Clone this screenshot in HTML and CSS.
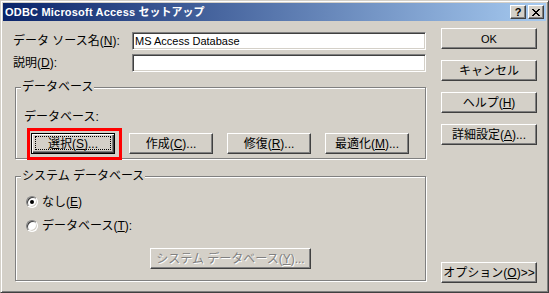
FILE: index.html
```html
<!DOCTYPE html>
<html lang="ja">
<head>
  <meta charset="UTF-8">
  <meta name="viewport" content="width=device-width, initial-scale=1.0">
  <link rel="stylesheet" href="styles.css">
  <title>ODBC Microsoft Access セットアップ</title>
</head>
<body>
  <div class="window">
    <div class="titlebar">
      <span class="title">ODBC Microsoft Access <span class="title_jp">セットアップ</span></span>
      <div class="caption_buttons">
        <div class="cap cap_help">?</div>
        <div class="cap">
          <svg width="8" height="7" viewBox="0 0 8 7" shape-rendering="crispEdges">
            <path d="M0 0h2v1H0z M6 0h2v1H6z M1 1h2v1H1z M5 1h2v1H5z M2 2h4v1H2z M3 3h2v1H3z M2 4h4v1H2z M1 5h2v1H1z M5 5h2v1H5z M0 6h2v1H0z M6 6h2v1H6z" fill="#000"/>
          </svg>
        </div>
      </div>
    </div>

    <div class="content">
      <div class="left">
        <div class="field">
          <label class="field_label">データ ソース名<span class="key">(<u>N</u>):</span></label>
          <div class="input">MS Access Database</div>
        </div>
        <div class="field">
          <label class="field_label">説明<span class="key">(<u>D</u>):</span></label>
          <div class="input"></div>
        </div>

        <fieldset class="group group_db">
          <legend>データベース</legend>
          <div class="caption">データベース<span class="key">:</span></div>
          <div class="btn_row">
            <button class="btn default marked">選択<span class="key">(<u>S</u>)...</span></button>
            <button class="btn">作成<span class="key">(<u>C</u>)...</span></button>
            <button class="btn">修復<span class="key">(<u>R</u>)...</span></button>
            <button class="btn">最適化<span class="key">(<u>M</u>)...</span></button>
          </div>
        </fieldset>

        <fieldset class="group group_sys">
          <legend>システム データベース</legend>
          <div class="option">
            <span class="radio checked"></span>
            <span>なし<span class="key">(<u>E</u>)</span></span>
          </div>
          <div class="option">
            <span class="radio"></span>
            <span>データベース<span class="key">(<u>T</u>):</span></span>
          </div>
          <button class="btn disabled sysdb">システム データベース<span class="key">(<u>Y</u>)...</span></button>
        </fieldset>
      </div>

      <div class="right">
        <button class="btn btn_latin">OK</button>
        <button class="btn">キャンセル</button>
        <button class="btn">ヘルプ<span class="key">(<u>H</u>)</span></button>
        <button class="btn">詳細設定<span class="key">(<u>A</u>)...</span></button>
        <button class="btn options">オプション<span class="key">(<u>O</u>)&gt;&gt;</span></button>
      </div>
    </div>
  </div>
</body>
</html>
```

FILE: styles.css
```css
* {
  box-sizing: border-box;
}

body {
  margin: 0;
  background: #d4d0c8;
  color: #000;
  font: 12px/14px "Liberation Sans", "Noto Sans CJK JP", sans-serif;
}

.window {
  display: flex;
  flex-direction: column;
  width: 549px;
  height: 293px;
  padding: 2px;
  border: 1px solid;
  border-color: #d4d0c8 #404040 #404040 #d4d0c8;
  box-shadow: inset 1px 1px #fff, inset -1px -1px #808080;
  background: #d4d0c8;
}

/* title bar */

.titlebar {
  display: flex;
  align-items: center;
  height: 18px;
  padding: 0 2px;
  background: linear-gradient(to right, #0a246a, #a6caf0);
  color: #fff;
}

.title {
  flex: 1;
  font: bold 11px/14px "Liberation Sans", "Noto Sans CJK JP", sans-serif;
  letter-spacing: 0.2px;
}

.title_jp {
  font-size: 11px;
  letter-spacing: 0;
}

.caption_buttons {
  display: flex;
  gap: 2px;
}

.cap {
  display: flex;
  align-items: center;
  justify-content: center;
  width: 16px;
  height: 14px;
  border: 1px solid;
  border-color: #fff #404040 #404040 #fff;
  box-shadow: inset -1px -1px #808080;
  background: #d4d0c8;
}

.cap_help {
  color: #000;
  font: bold 11px/1 "Liberation Sans", sans-serif;
}

/* body */

.content {
  flex: 1;
  display: flex;
  padding: 0 9px 7px 10px;
}

.left {
  width: 414px;
}

.right {
  display: flex;
  flex-direction: column;
  gap: 11px;
  width: 96px;
  margin-left: auto;
  padding-top: 7px;
}

.right .options {
  margin-top: auto;
}

.field {
  display: flex;
  align-items: center;
  height: 18px;
  margin-top: 4px;
}

.field:first-child {
  margin-top: 11px;
}

.field_label {
  width: 119px;
}

/* latin mnemonics, kept out of the CJK font */
.key {
  font-family: "Liberation Sans", sans-serif;
}

u {
  text-underline-offset: 1px;
}

.input {
  width: 294px;
  height: 18px;
  padding-left: 2px;
  border: 1px solid;
  border-color: #808080 #fff #fff #808080;
  box-shadow: inset 1px 1px #404040, inset -1px -1px #d4d0c8;
  background: #fff;
  font: 11px/16px "Liberation Sans", sans-serif;
}

/* group boxes */

.group {
  width: 411px;
  min-inline-size: 0;
  margin: 8px 0 0 2px;
  border: 1px solid #808080;
  box-shadow: 1px 1px #fff, inset 1px 1px #fff;
}

.group legend {
  margin-left: 5px;
  padding: 0 1px;
  background: #d4d0c8;
  line-height: 14px;
}

.group_db {
  padding: 16px 0 4px;
}

.caption {
  padding-left: 8px;
}

.btn_row {
  display: flex;
  gap: 14px;
  margin: 9px 0 0 15px;
}

.btn_row .btn {
  width: 84px;
}

.group_sys {
  margin-top: 10px;
  padding: 12px 0 11px;
}

.option {
  display: flex;
  align-items: center;
  gap: 4px;
  height: 14px;
  padding-left: 10px;
}

.option + .option {
  margin-top: 10px;
}

.radio {
  display: flex;
  align-items: center;
  justify-content: center;
  width: 12px;
  height: 12px;
  border: 1px solid;
  border-color: #808080 #fff #fff #808080;
  border-radius: 50%;
  box-shadow: inset 1px 1px #404040, inset -1px -1px #d4d0c8;
  background: #fff;
}

.radio.checked::after {
  content: "";
  width: 4px;
  height: 4px;
  border-radius: 50%;
  background: #000;
}

/* buttons */

.btn {
  display: flex;
  align-items: center;
  justify-content: center;
  width: 96px;
  height: 21px;
  padding: 0;
  border: 1px solid;
  border-color: #fff #404040 #404040 #fff;
  box-shadow: inset -1px -1px #808080;
  background: #d4d0c8;
  color: #000;
  font: inherit;
}

.btn_latin {
  font: 11px/14px "Liberation Sans", sans-serif;
}

.btn.default {
  position: relative;
  border-color: #000;
  box-shadow: inset 1px 1px #fff, inset -1px -1px #404040, inset -2px -2px #808080;
}

.btn.default::before {
  content: "";
  position: absolute;
  inset: 2px 3px 3px 3px;
  border: 1px dotted #000;
}

.btn.marked::after {
  content: "";
  position: absolute;
  left: -5px;
  top: -6px;
  right: -8px;
  bottom: -7px;
  border: 3px solid #f00;
}

.btn.disabled {
  color: #808080;
  text-shadow: 1px 1px #fff;
}

.sysdb {
  width: 161px;
  margin: 15px 0 0 134px;
}
```
